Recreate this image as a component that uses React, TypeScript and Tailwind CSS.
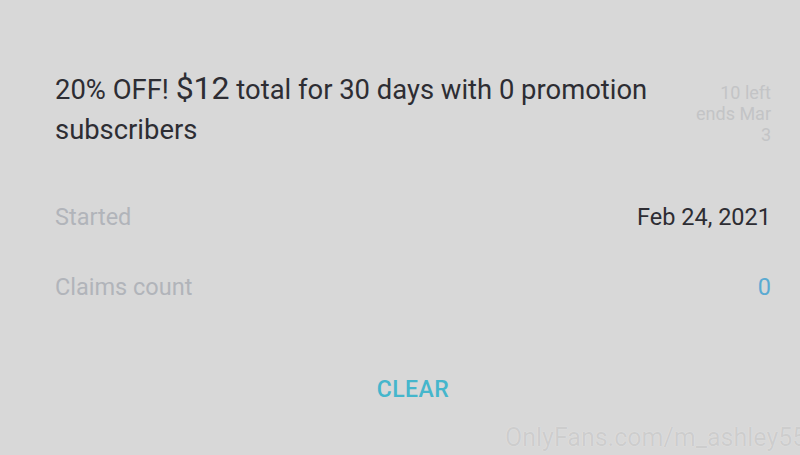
export default function App() {
  return (
    <div
      className="relative w-[800px] h-[455px] overflow-hidden bg-[#d8d8d8] text-[#2d2d33]"
      style={{ fontFamily: "Roboto, 'Noto Sans', sans-serif" }}
    >
      <div className="pl-[55px] pr-[29px] pt-[68px]">
        <div className="flex items-start justify-between">
          <h1 className="w-[620px] text-[27.4px] leading-[40px] font-normal">
            20% OFF! <span className="text-[32px]">$12</span> total for 30 days with 0 promotion subscribers
          </h1>
          <div className="mt-[14px] w-[84px] text-right text-[18px] leading-[21px] text-[#c3c4c6]">
            10 left ends Mar 3
          </div>
        </div>

        <div className="mt-[50px] flex items-center justify-between text-[23.5px] h-[36px]">
          <span className="text-[#b1b4ba]">Started</span>
          <span>Feb 24, 2021</span>
        </div>
        <div className="mt-[34px] flex items-center justify-between text-[23.5px] h-[36px]">
          <span className="text-[#b1b4ba]">Claims count</span>
          <span className="text-[#5aaad2]">0</span>
        </div>

        <div className="mt-[67px] flex justify-center">
          <button className="text-[23px] font-medium tracking-[0.5px] text-[#45b6cc]">CLEAR</button>
        </div>
      </div>

      <div
        className="absolute left-[505px] top-[419px] whitespace-nowrap text-[25px] text-[#cdcdcd]"
        style={{ textShadow: "0 0 1px rgba(255,255,255,0.6)" }}
      >
        OnlyFans.com/m_ashley55
      </div>
    </div>
  );
}
